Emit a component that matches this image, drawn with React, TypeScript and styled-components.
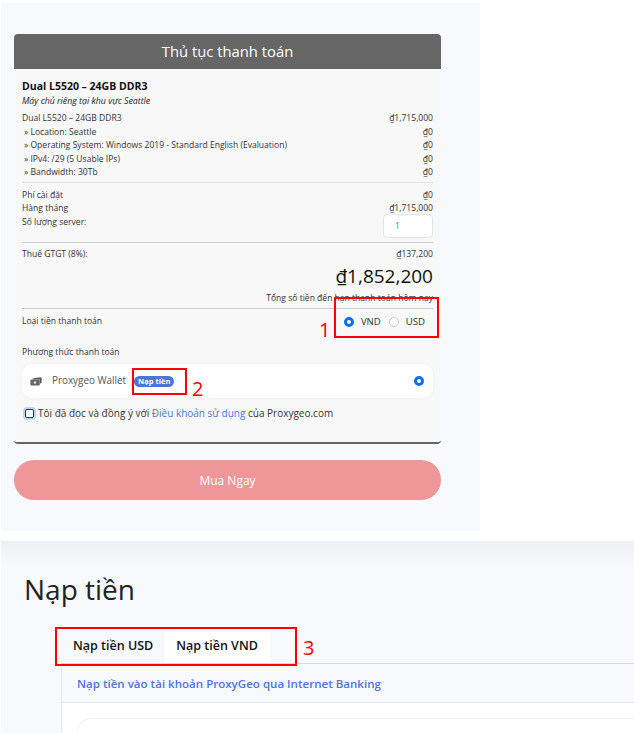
import React from 'react'
import styled, { createGlobalStyle } from 'styled-components'

const GlobalStyle = createGlobalStyle`
  html, body { margin: 0; padding: 0; background: #fff; }
  body { font-family: "Open Sans", "Noto Sans", "Liberation Sans", sans-serif; color: #333; }
  #root { width: 634px; height: 733px; overflow: hidden; }
`

const items = [
  { label: 'Dual L5520 – 24GB DDR3', price: '₫1,715,000', main: true },
  { label: '» Location: Seattle', price: '₫0' },
  { label: '» Operating System: Windows 2019 - Standard English (Evaluation)', price: '₫0' },
  { label: '» IPv4: /29 (5 Usable IPs)', price: '₫0' },
  { label: '» Bandwidth: 30Tb', price: '₫0' },
]

function WalletIcon() {
  return (
    <svg width="12" height="9" viewBox="0 0 12 9">
      <path d="M2.5 1.6 10.6 0.2 11.6 1v5l-1.6.6V2.4H3z" fill="#555" />
      <rect x="0.4" y="2.6" width="9.4" height="5.8" rx="1.2" fill="#666" />
      <circle cx="5" cy="5.5" r="1.3" fill="#ddd" />
    </svg>
  )
}

export default function App() {
  return (
    <Screen>
      <GlobalStyle />
      <CheckoutPanel>
        <Card>
          <CardHeader>Thủ tục thanh toán</CardHeader>
          <CardBody>
            <ProductName>Dual L5520 – 24GB DDR3</ProductName>
            <ProductNote>Máy chủ riêng tại khu vực Seattle</ProductNote>
            {items.map((item) => (
              <Row key={item.label} $indent={!item.main}>
                <span>{item.label}</span>
                <span>{item.price}</span>
              </Row>
            ))}
            <FirstDivider />
            <Row>
              <span>Phí cài đặt</span>
              <span>₫0</span>
            </Row>
            <Row>
              <span>Hàng tháng</span>
              <span>₫1,715,000</span>
            </Row>
            <QuantityRow>
              <span>Số lượng server:</span>
              <QuantityBox>1</QuantityBox>
            </QuantityRow>
            <Divider />
            <Row>
              <span>Thuế GTGT (8%):</span>
              <span>₫137,200</span>
            </Row>
            <Total>₫1,852,200</Total>
            <TotalNote>Tổng số tiền đến hạn thanh toán hôm nay</TotalNote>
            <CurrencyDivider />
            <CurrencyRow>
              <span>Loại tiền thanh toán</span>
              <CurrencyOptions>
                <Radio $checked />
                <CurrencyLabel>VND</CurrencyLabel>
                <Radio />
                <CurrencyLabel>USD</CurrencyLabel>
              </CurrencyOptions>
            </CurrencyRow>
            <MethodTitle>Phương thức thanh toán</MethodTitle>
            <WalletRow>
              <WalletIcon />
              <WalletName>Proxygeo Wallet</WalletName>
              <TopUpBadge>Nạp tiền</TopUpBadge>
              <WalletRadio>
                <Radio $checked />
              </WalletRadio>
            </WalletRow>
            <TermsRow>
              <TermsCheck />
              <span>
                Tôi đã đọc và đồng ý với <TermsLink>Điều khoản sử dụng</TermsLink> của Proxygeo.com
              </span>
            </TermsRow>
          </CardBody>
        </Card>
        <BuyButton>Mua Ngay</BuyButton>
      </CheckoutPanel>

      <DepositPanel>
        <DepositTitle>Nạp tiền</DepositTitle>
        <DepositArea>
          <Tabs>
            <Tab>Nạp tiền USD</Tab>
            <Tab $active>Nạp tiền VND</Tab>
          </Tabs>
          <DepositCard>
            <DepositHeading>Nạp tiền vào tài khoản ProxyGeo qua Internet Banking</DepositHeading>
            <DepositContent>
              <InnerCard />
            </DepositContent>
          </DepositCard>
        </DepositArea>
      </DepositPanel>

      <Marker $x={334} $y={297} $w={105} $h={41} />
      <MarkerNumber $x={319} $y={318}>1</MarkerNumber>
      <Marker $x={132} $y={368} $w={55} $h={27} />
      <MarkerNumber $x={192} $y={377}>2</MarkerNumber>
      <Marker $x={55} $y={627} $w={242} $h={39} />
      <MarkerNumber $x={303} $y={636}>3</MarkerNumber>
    </Screen>
  )
}

const Screen = styled.div`
  position: relative;
  width: 634px;
  height: 733px;
  overflow: hidden;
`

const CheckoutPanel = styled.div`
  box-sizing: border-box;
  width: 479px;
  height: 528px;
  margin: 3px 0 0 1px;
  padding: 31px 39px 0 13px;
  background: #f8f9fd;
`

const Card = styled.div`
  background: #f8f8f8;
  border-bottom: 2px solid #666;
  border-radius: 4px;
  height: 410px;
  box-sizing: border-box;
  overflow: hidden;
`

const CardHeader = styled.div`
  height: 35px;
  background: #666;
  color: #fff;
  font-size: 14.8px;
  line-height: 35px;
  text-align: center;
`

const CardBody = styled.div`
  padding: 9px 8px 0;
  font-size: 8.55px;
  line-height: 13.5px;
`

const ProductName = styled.div`
  font-size: 10.5px;
  line-height: 16px;
  font-weight: 700;
  color: #111;
`

const ProductNote = styled.div`
  font-size: 8.8px;
  line-height: 14px;
  font-style: italic;
  margin-bottom: 4px;
  color: #222;
`

const Row = styled.div<{ $indent?: boolean }>`
  display: flex;
  justify-content: space-between;
  padding-left: ${(p) => (p.$indent ? '2px' : '0')};
`

const Divider = styled.div`
  height: 1px;
  background: #ccc;
  margin: 4px 0 5px;
`

const FirstDivider = styled(Divider)`
  background: #e2e2e2;
  margin: 2px 0 6px;
`

const CurrencyDivider = styled(Divider)`
  margin: 3px 0 6px;
`

const QuantityRow = styled(Row)`
  align-items: flex-start;
  margin-bottom: 3px;
`

const QuantityBox = styled.div`
  box-sizing: border-box;
  width: 50px;
  height: 24px;
  margin-top: -2px;
  background: #fff;
  border: 1px solid #e4e4e4;
  border-radius: 4px;
  padding-left: 11px;
  line-height: 22px;
  color: #777;
`

const Total = styled.div`
  text-align: right;
  font-size: 19px;
  line-height: 26px;
  margin-top: 2px;
  color: #111;
`

const TotalNote = styled.div`
  text-align: right;
  line-height: 14px;
  margin-top: 2px;
`

const CurrencyRow = styled(Row)`
  align-items: flex-start;
`

const CurrencyOptions = styled.div`
  display: flex;
  align-items: center;
  margin: 0 8px 0 0;
`

const Radio = styled.span<{ $checked?: boolean }>`
  box-sizing: border-box;
  display: block;
  width: 10px;
  height: 10px;
  border-radius: 50%;
  background: #fff;
  border: ${(p) => (p.$checked ? '3px solid #0d6efd' : '1px solid #c8c8c8')};
`

const CurrencyLabel = styled.span`
  margin: 0 8px 0 7px;
  font-size: 9.6px;
  &:last-child { margin-right: 0; }
`

const MethodTitle = styled.div`
  margin-top: 17px;
`

const WalletRow = styled.div`
  display: flex;
  align-items: center;
  height: 34px;
  margin-top: 5px;
  padding: 0 8px;
  background: #fff;
  border-radius: 10px;
  box-shadow: 0 0 4px rgba(0, 0, 0, 0.04);
`

const WalletName = styled.span`
  margin-left: 10px;
  font-size: 9.9px;
  color: #555;
`

const TopUpBadge = styled.span`
  margin-left: 8px;
  padding: 0 4px;
  background: #4e73df;
  border-radius: 6px;
  color: #fff;
  font-size: 7.5px;
  font-weight: 700;
  line-height: 11px;
`

const WalletRadio = styled.span`
  margin: 0 1px 0 auto;
`

const TermsRow = styled.div`
  display: flex;
  align-items: center;
  gap: 4px;
  margin-top: 9px;
  padding-left: 3px;
  font-size: 10px;
`

const TermsCheck = styled.span`
  box-sizing: border-box;
  width: 9px;
  height: 9px;
  border: 1px solid #333;
  border-radius: 2px;
  background: #fff;
  box-shadow: 0 0 0 2px #b6d7f5;
`

const TermsLink = styled.span`
  color: #4e73df;
`

const BuyButton = styled.div`
  height: 40px;
  margin-top: 16px;
  border-radius: 20px;
  background: #ee9698;
  color: #fff;
  font-size: 12px;
  line-height: 41px;
  text-align: center;
`

const DepositPanel = styled.div`
  height: 192px;
  margin: 10px 0 0 1px;
  background: linear-gradient(#eeeff2, #f8f9fd 26px);
`

const DepositTitle = styled.div`
  padding: 27px 0 0 23px;
  font-size: 28px;
  line-height: 42px;
  color: #222;
`

const DepositArea = styled.div`
  margin: 22px 0 0 60px;
`

const Tabs = styled.div`
  display: flex;
  height: 31px;
  padding-left: 1px;
  border-bottom: 1px solid #d8d9de;
`

const Tab = styled.div<{ $active?: boolean }>`
  padding: 0 12px 0 ${(p) => (p.$active ? '11px' : '11px')};
  background: ${(p) => (p.$active ? '#fff' : 'transparent')};
  font-size: 12.5px;
  font-weight: 600;
  line-height: 27px;
  color: #111;
`

const DepositCard = styled.div`
  border-left: 1px solid #e6e7ec;
`

const DepositHeading = styled.div`
  height: 38px;
  padding-left: 15px;
  border-bottom: 1px solid #e3e6f0;
  color: #4e73df;
  font-size: 11.55px;
  font-weight: 600;
  line-height: 40px;
`

const DepositContent = styled.div`
  height: 40px;
  padding: 15px 0 0 15px;
  background: #fff;
`

const InnerCard = styled.div`
  height: 40px;
  border-top: 1px solid #f2f2f2;
  border-left: 1px solid #f2f2f2;
  border-radius: 14px 0 0 0;
`

const Marker = styled.div<{ $x: number; $y: number; $w: number; $h: number }>`
  position: absolute;
  left: ${(p) => p.$x}px;
  top: ${(p) => p.$y}px;
  width: ${(p) => p.$w}px;
  height: ${(p) => p.$h}px;
  box-sizing: border-box;
  border: 2px solid #f00;
`

const MarkerNumber = styled.div<{ $x: number; $y: number }>`
  position: absolute;
  left: ${(p) => p.$x}px;
  top: ${(p) => p.$y}px;
  color: #f00;
  font-size: 20px;
  line-height: 24px;
`
